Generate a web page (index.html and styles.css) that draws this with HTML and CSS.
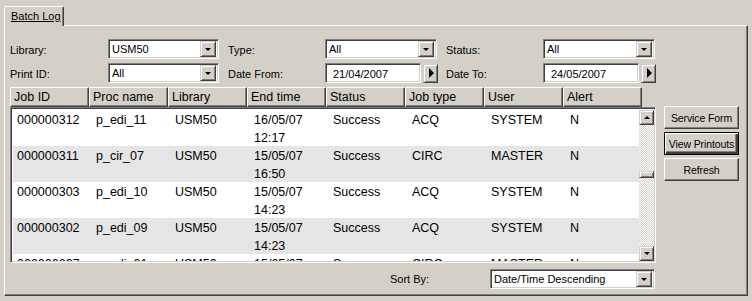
FILE: index.html
```html
<!DOCTYPE html>
<html lang="en">
<head>
    <meta charset="UTF-8">
    <title>Batch Log</title>
    <link rel="stylesheet" href="styles.css">
</head>
<body>
    <div class="window">
        <div class="tabs">
            <div class="tab"><span>Batch Log</span></div>
        </div>

        <div class="panel">
            <div class="filters">
                <label class="lbl">Library:</label>
                <div class="combo"><span>USM50</span><i class="drop"></i></div>
                <label class="lbl gap">Type:</label>
                <div class="combo"><span>All</span><i class="drop"></i></div>
                <label class="lbl gap">Status:</label>
                <div class="combo"><span>All</span><i class="drop"></i></div>

                <label class="lbl">Print ID:</label>
                <div class="combo"><span>All</span><i class="drop"></i></div>
                <label class="lbl gap">Date From:</label>
                <div class="date"><div class="date-box">21/04/2007</div><i class="next"></i></div>
                <label class="lbl gap">Date To:</label>
                <div class="date"><div class="date-box">24/05/2007</div><i class="next"></i></div>
            </div>

            <div class="main">
                <div class="list-col">
                    <div class="grid-head">
                        <div>Job ID</div>
                        <div>Proc name</div>
                        <div>Library</div>
                        <div>End time</div>
                        <div>Status</div>
                        <div>Job type</div>
                        <div>User</div>
                        <div>Alert</div>
                    </div>
                    <div class="list">
                        <div class="rows">
                            <div class="row">
                                <div>000000312</div><div>p_edi_11</div><div>USM50</div><div>16/05/07<br>12:17</div>
                                <div>Success</div><div>ACQ</div><div>SYSTEM</div><div>N</div>
                            </div>
                            <div class="row alt">
                                <div>000000311</div><div>p_cir_07</div><div>USM50</div><div>15/05/07<br>16:50</div>
                                <div>Success</div><div>CIRC</div><div>MASTER</div><div>N</div>
                            </div>
                            <div class="row">
                                <div>000000303</div><div>p_edi_10</div><div>USM50</div><div>15/05/07<br>14:23</div>
                                <div>Success</div><div>ACQ</div><div>SYSTEM</div><div>N</div>
                            </div>
                            <div class="row alt">
                                <div>000000302</div><div>p_edi_09</div><div>USM50</div><div>15/05/07<br>14:23</div>
                                <div>Success</div><div>ACQ</div><div>SYSTEM</div><div>N</div>
                            </div>
                            <div class="row">
                                <div>000000297</div><div>p_edi_01</div><div>USM50</div><div>15/05/07<br>14:20</div>
                                <div>Success</div><div>CIRC</div><div>MASTER</div><div>N</div>
                            </div>
                        </div>
                        <div class="scrollbar">
                            <div class="sb-btn up"></div>
                            <div class="sb-track">
                                <div class="sb-thumb"></div>
                            </div>
                            <div class="sb-btn down"></div>
                        </div>
                    </div>
                    <div class="sort-row">
                        <label class="sort-lbl">Sort By:</label>
                        <div class="combo sort"><span>Date/Time Descending</span><i class="drop"></i></div>
                    </div>
                </div>

                <div class="actions">
                    <button class="btn">Service Form</button>
                    <button class="btn default">View Printouts</button>
                    <button class="btn">Refresh</button>
                </div>
            </div>
        </div>
    </div>
</body>
</html>
```

FILE: styles.css
```css
* {
    margin: 0;
    padding: 0;
    box-sizing: border-box;
}

body {
    font-family: "Liberation Sans", Arial, sans-serif;
    font-size: 11px;
    background-color: #d4d0c8;
    color: #000000;
    width: 752px;
    height: 301px;
    overflow: hidden;
}

.window {
    padding: 6px 4px 0 4px;
}

.tabs {
    display: flex;
    height: 19px;
}

.tab {
    width: 60px;
    height: 20px;
    border-top: 1px solid #ffffff;
    border-left: 1px solid #ffffff;
    border-right: 1px solid #404040;
    border-radius: 2px 2px 0 0;
    box-shadow: inset -1px 0 #808080;
    background: #d4d0c8;
    position: relative;
    z-index: 1;
    padding: 3px 0 0 6px;
}

.tab span {
    text-decoration: underline;
}

.panel {
    width: 744px;
    height: 271px;
    border: 1px solid;
    border-color: #ffffff #404040 #404040 #ffffff;
    box-shadow: inset -1px -1px #808080;
    padding: 13px 0 0 5px;
}

/* filter rows */

.filters {
    display: grid;
    grid-template-columns: 98px 111px 106px 112px 106px 112px;
    grid-auto-rows: 20px;
    row-gap: 4px;
    align-items: center;
}

.lbl {
    padding-top: 1px;
}

.lbl.gap {
    padding-left: 9px;
}

.combo {
    display: flex;
    align-items: center;
    height: 20px;
    background: #ffffff;
    border: 1px solid;
    border-color: #808080 #ffffff #ffffff #808080;
    box-shadow: inset 1px 1px #404040, inset -1px -1px #d4d0c8;
    padding: 2px 2px 2px 3px;
}

.combo span {
    flex: 1;
}

.drop,
.next {
    display: flex;
    align-items: center;
    justify-content: center;
    width: 16px;
    height: 16px;
    background: #d4d0c8;
    border: 1px solid;
    border-color: #d4d0c8 #404040 #404040 #d4d0c8;
    box-shadow: inset 1px 1px #ffffff, inset -1px -1px #808080;
}

.drop::after {
    content: "";
    border-left: 3px solid transparent;
    border-right: 3px solid transparent;
    border-top: 3px solid #000000;
    margin-top: 1px;
}

.date {
    display: flex;
    align-items: center;
    gap: 2px;
    width: 113px;
}

.date-box {
    width: 96px;
    height: 20px;
    background: #ffffff;
    border: 1px solid;
    border-color: #808080 #ffffff #ffffff #808080;
    box-shadow: inset 1px 1px #404040, inset -1px -1px #d4d0c8;
    padding: 4px 0 0 7px;
}

.next {
    width: 15px;
    height: 19px;
}

.next::after {
    content: "";
    border-top: 5px solid transparent;
    border-bottom: 5px solid transparent;
    border-left: 5px solid #000000;
    margin-left: 1px;
}

/* list */

.main {
    display: flex;
    margin-top: 4px;
}

.list-col {
    width: 646px;
}

.grid-head {
    display: grid;
    grid-template-columns: repeat(8, 79px);
    height: 20px;
    font-size: 12.5px;
}

.grid-head div {
    border: 1px solid;
    border-color: #ffffff #404040 #404040 #ffffff;
    box-shadow: inset -1px -1px #808080;
    padding: 2px 0 0 3px;
}

.list {
    display: flex;
    height: 156px;
    background: #ffffff;
    border: 1px solid;
    border-color: #808080 #ffffff #ffffff #808080;
    box-shadow: inset 1px 1px #404040, inset -1px -1px #d4d0c8;
    padding: 2px 1px 1px 2px;
    overflow: hidden;
}

.rows {
    flex: 1;
    overflow: hidden;
    font-size: 12.5px;
    line-height: 18px;
}

.row {
    display: grid;
    grid-template-columns: 77px repeat(7, 79px);
    height: 36px;
    padding-top: 1px;
    background: #ffffff;
}

.row.alt {
    background: #e5e5e5;
}

.row div {
    padding-left: 6px;
}

.row div:first-child {
    padding-left: 4px;
}

.scrollbar {
    display: flex;
    flex-direction: column;
    width: 15px;
}

.sb-btn {
    display: flex;
    align-items: center;
    justify-content: center;
    height: 15px;
    background: #d4d0c8;
    border: 1px solid;
    border-color: #d4d0c8 #404040 #404040 #d4d0c8;
    box-shadow: inset 1px 1px #ffffff, inset -1px -1px #808080;
}

.sb-btn.up::after {
    content: "";
    border-left: 3px solid transparent;
    border-right: 3px solid transparent;
    border-bottom: 3px solid #000000;
}

.sb-btn.down::after {
    content: "";
    border-left: 3px solid transparent;
    border-right: 3px solid transparent;
    border-top: 3px solid #000000;
}

.sb-track {
    flex: 1;
    background: repeating-conic-gradient(#d4d0c8 0 25%, #ffffff 0 50%) 0 0 / 2px 2px;
    padding-top: 46px;
}

.sb-thumb {
    height: 7px;
    background: #d4d0c8;
    border: 1px solid;
    border-color: #d4d0c8 #404040 #404040 #d4d0c8;
    box-shadow: inset 1px 1px #ffffff, inset -1px -1px #808080;
}

.sort-row {
    display: flex;
    justify-content: flex-end;
    align-items: center;
    margin-top: 6px;
    padding-right: 1px;
}

.sort-lbl {
    width: 100px;
}

.combo.sort {
    width: 165px;
}

/* buttons */

.actions {
    display: flex;
    flex-direction: column;
    gap: 3px;
    margin: 19px 0 0 8px;
}

.btn {
    width: 75px;
    height: 23px;
    padding: 0;
    font-family: inherit;
    font-size: 10.5px;
    letter-spacing: -0.1px;
    color: #000000;
    background: #d4d0c8;
    border: 1px solid;
    border-color: #ffffff #404040 #404040 #ffffff;
    box-shadow: inset -1px -1px #808080;
}

.btn.default {
    border-color: #000000;
    box-shadow: inset 1px 1px #ffffff, inset -2px -2px #404040, inset -3px -3px #808080;
}
```
